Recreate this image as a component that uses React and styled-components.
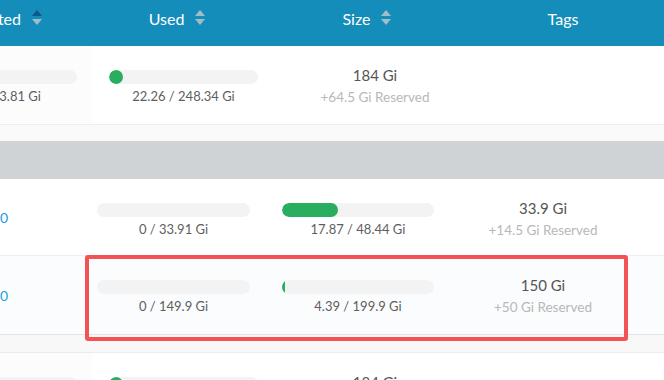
import React from "react";
import styled, { createGlobalStyle } from "styled-components";

const Global = createGlobalStyle`
  html, body { margin: 0; padding: 0; background: #fff; }
  body { font-family: Lato, "Noto Sans", "Liberation Sans", sans-serif; }
  #root { width: 664px; height: 380px; overflow: hidden; }
`;

const Table = styled.div`
  width: 664px;
  height: 380px;
  overflow: hidden;
  background: #fff;
`;

const Header = styled.div`
  display: grid;
  grid-template-columns: 82px 190px 190px 1fr;
  height: 46px;
  background: #148dba;
  color: #fff;
  font-size: 16px;
`;

const HeadCell = styled.div`
  display: flex;
  align-items: flex-start;
  justify-content: ${(p) => (p.$clip ? "flex-end" : "center")};
  padding-top: 8px;
  padding-right: ${(p) => (p.$clip ? "40px" : "0")};
  overflow: hidden;
  white-space: nowrap;
  gap: 11px;
  line-height: 22px;
`;

const SortIcon = ({ active }) => (
  <svg width="10" height="15" viewBox="0 0 10 15" style={{ marginTop: 2, flexShrink: 0 }}>
    <polygon points="5,0 10,6 0,6" fill={active ? "#0c5a8b" : "#a3bcc7"} />
    <polygon points="0,9 10,9 5,15" fill="#a3bcc7" />
  </svg>
);

const TopRow = styled.div`
  display: grid;
  grid-template-columns: 92px 183px 200px 1fr;
  height: 78px;
  border-bottom: 1px solid #eeeeee;
  background: #fff;
`;

const GroupRow = styled.div`
  position: relative;
  display: grid;
  grid-template-columns: 82px 183px 185px 186px 1fr;
  height: ${(p) => p.$h}px;
  border-bottom: 1px solid ${(p) => (p.$hover ? "#e4e4e4" : "#efefef")};
  background: ${(p) => (p.$hover ? "#fafcfd" : "#fff")};
`;

const Band = styled.div`
  height: ${(p) => p.$h}px;
  background: ${(p) => p.$bg};
  border-bottom: ${(p) => (p.$line ? "1px solid #ececec" : "none")};
`;

const GroupHeader = styled.div`
  height: 38px;
  background: #cfd3d6;
`;

const Cell = styled.div`
  display: flex;
  flex-direction: column;
  align-items: ${(p) => (p.$clip ? "flex-end" : "stretch")};
  padding: ${(p) => p.$pad || "24px 17px 0"};
  overflow: hidden;
  background: ${(p) => (p.$sorted ? "#fcfcfc" : "transparent")};
  min-width: 0;
`;

const BarBlock = styled.div`
  display: flex;
  flex-direction: column;
  width: ${(p) => (p.$w ? `${p.$w}px` : "auto")};
  flex-shrink: 0;
`;

const Track = styled.div`
  height: 14px;
  border-radius: 7px;
  background: #f3f3f3;
  overflow: hidden;
`;

const Fill = styled.div`
  height: 100%;
  border-radius: 7px;
  background: #29ad5f;
`;

const BarText = styled.div`
  margin-top: 2px;
  text-align: center;
  font-size: 13px;
  line-height: 20px;
  color: #5e5e5e;
  white-space: nowrap;
`;

const SizeCell = styled.div`
  display: flex;
  flex-direction: column;
  align-items: center;
  padding-top: 18px;
  white-space: nowrap;
`;

const SizeValue = styled.div`
  font-size: 15px;
  line-height: 22px;
  color: #555;
`;

const Reserved = styled.div`
  font-size: 13.5px;
  line-height: 22px;
  color: #b8b8b8;
`;

const LinkCell = styled.div`
  display: flex;
  align-items: center;
  font-size: 14px;
  color: #1d9ce0;
`;

const Highlight = styled.div`
  position: absolute;
  left: 85px;
  top: -1px;
  width: 543px;
  height: 86px;
  box-sizing: border-box;
  border: 4px solid #f35453;
  border-radius: 3px;
  pointer-events: none;
`;

const Bar = ({ used, total, w, min }) => {
  const pct = Math.max((used / total) * 100, 0);
  return (
    <BarBlock $w={w}>
      <Track>
        {used > 0 && <Fill style={{ width: `${pct}%`, minWidth: min ? 14 : 0 }} />}
      </Track>
      <BarText>
        {used} / {total} Gi
      </BarText>
    </BarBlock>
  );
};

const Size = ({ value, reserved }) => (
  <SizeCell>
    <SizeValue>{value} Gi</SizeValue>
    <Reserved>+{reserved} Gi Reserved</Reserved>
  </SizeCell>
);

const PoolRow = () => (
  <TopRow>
    <Cell $sorted $clip $pad="24px 15px 0 0">
      <BarBlock $w={149}>
        <Track />
        <BarText>0 / 173.81 Gi</BarText>
      </BarBlock>
    </Cell>
    <Cell>
      <Bar used={22.26} total={248.34} min />
    </Cell>
    <Size value="184" reserved="64.5" />
    <div />
  </TopRow>
);

export default function App() {
  return (
    <>
      <Global />
      <Table>
        <Header>
          <HeadCell $clip>
            <span>Allocated</span>
            <SortIcon active />
          </HeadCell>
          <HeadCell>
            <span>Used</span>
            <SortIcon />
          </HeadCell>
          <HeadCell>
            <span>Size</span>
            <SortIcon />
          </HeadCell>
          <HeadCell>
            <span>Tags</span>
          </HeadCell>
        </Header>
        <PoolRow />
        <Band $h={16} $bg="#fafafa" />
        <GroupHeader />
        <GroupRow $h={76}>
          <LinkCell>0</LinkCell>
          <Cell $pad="24px 15px 0">
            <Bar used={0} total={33.91} />
          </Cell>
          <Cell $pad="24px 16px 0 17px">
            <Bar used={17.87} total={48.44} />
          </Cell>
          <Size value="33.9" reserved="14.5" />
          <div />
        </GroupRow>
        <GroupRow $h={78} $hover>
          <LinkCell>0</LinkCell>
          <Cell $pad="24px 15px 0">
            <Bar used={0} total={149.9} />
          </Cell>
          <Cell $pad="24px 16px 0 17px">
            <Bar used={4.39} total={199.9} />
          </Cell>
          <Size value="150" reserved="50" />
          <div />
          <Highlight />
        </GroupRow>
        <Band $h={17} $bg="#f8f8f8" $line />
        <PoolRow />
      </Table>
    </>
  );
}
